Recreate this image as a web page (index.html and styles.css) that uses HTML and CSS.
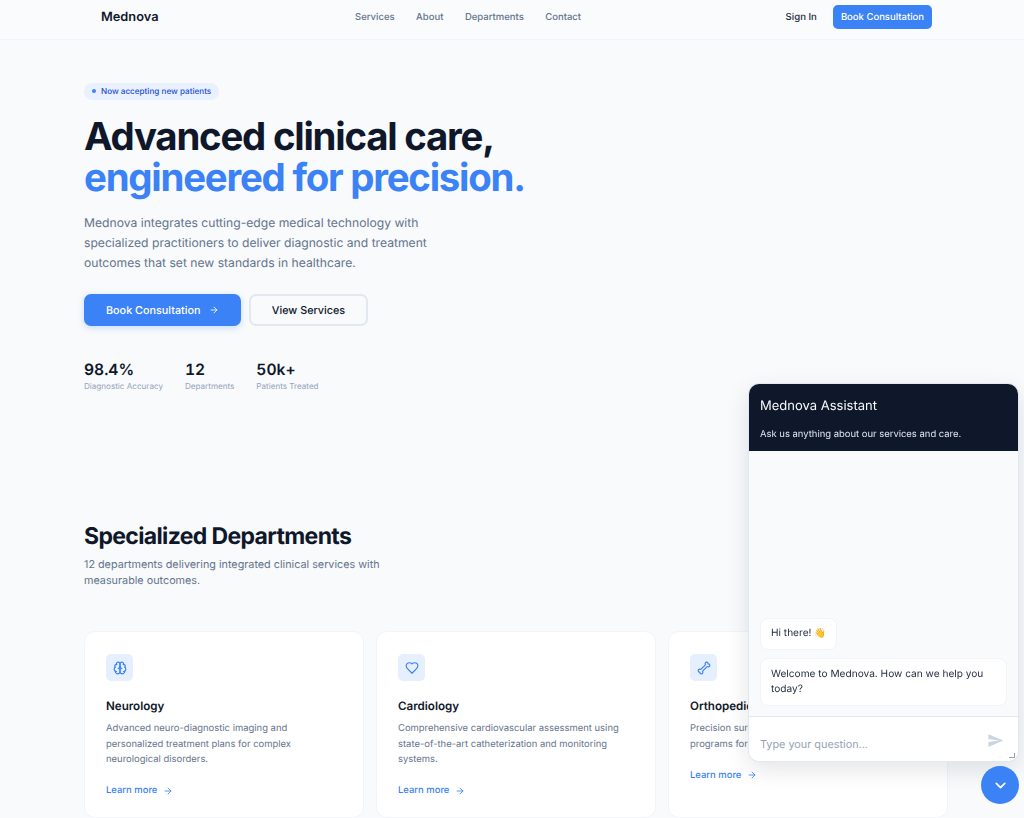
FILE: index.html
```html
<!DOCTYPE html>
<html lang="en">
<head>
<meta charset="utf-8">
<title>Mednova</title>
<link rel="stylesheet" href="styles.css">
</head>
<body>
<header class="nav">
  <div class="nav-inner">
    <a class="logo">Mednova</a>
    <nav class="nav-links">
      <a>Services</a><a>About</a><a>Departments</a><a>Contact</a>
    </nav>
    <div class="nav-actions">
      <a class="sign-in">Sign In</a>
      <a class="nav-cta">Book Consultation</a>
    </div>
  </div>
</header>
<main class="page">
  <section class="hero">
    <div class="badge"><span class="badge-dot"></span>Now accepting new patients</div>
    <h1>Advanced clinical care,<br><span class="accent">engineered for precision.</span></h1>
    <p class="lead">Mednova integrates cutting-edge medical technology with specialized practitioners to deliver diagnostic and treatment outcomes that set new standards in healthcare.</p>
    <div class="hero-actions">
      <a class="btn btn-primary">Book Consultation
        <svg class="arrow" viewBox="0 0 24 24"><path d="M5 12h14M12 5l7 7-7 7"/></svg>
      </a>
      <a class="btn btn-outline">View Services</a>
    </div>
    <div class="stats">
      <div><div class="stat-value">98.4%</div><div class="stat-label">Diagnostic Accuracy</div></div>
      <div><div class="stat-value">12</div><div class="stat-label">Departments</div></div>
      <div><div class="stat-value">50k+</div><div class="stat-label">Patients Treated</div></div>
    </div>
  </section>
  <section class="departments">
    <h2>Specialized Departments</h2>
    <p class="section-lead">12 departments delivering integrated clinical services with measurable outcomes.</p>
    <div class="cards">
      <article class="card">
        <div class="card-icon"><svg viewBox="0 0 24 24"><path d="M12 5a3 3 0 1 0-5.997.125 4 4 0 0 0-2.526 5.77 4 4 0 0 0 .556 6.588A4 4 0 1 0 12 18Z"/><path d="M12 5a3 3 0 1 1 5.997.125 4 4 0 0 1 2.526 5.77 4 4 0 0 1-.556 6.588A4 4 0 1 1 12 18Z"/><path d="M15 13a4.5 4.5 0 0 1-3-4 4.5 4.5 0 0 1-3 4"/><path d="M17.599 6.5a3 3 0 0 0 .399-1.375"/><path d="M6.003 5.125A3 3 0 0 0 6.401 6.5"/><path d="M3.477 10.896a4 4 0 0 1 .585-.396"/><path d="M19.938 10.5a4 4 0 0 1 .585.396"/><path d="M6 18a4 4 0 0 1-1.967-.516"/><path d="M19.967 17.484A4 4 0 0 1 18 18"/></svg></div>
        <h3>Neurology</h3>
        <p>Advanced neuro-diagnostic imaging and personalized treatment plans for complex neurological disorders.</p>
        <a class="learn">Learn more <svg class="arrow" viewBox="0 0 24 24"><path d="M5 12h14M12 5l7 7-7 7"/></svg></a>
      </article>
      <article class="card">
        <div class="card-icon"><svg viewBox="0 0 24 24"><path d="M19 14c1.49-1.46 3-3.21 3-5.5A5.5 5.5 0 0 0 16.5 3c-1.76 0-3 .5-4.5 2-1.5-1.5-2.74-2-4.5-2A5.5 5.5 0 0 0 2 8.5c0 2.3 1.5 4.05 3 5.5l7 7Z"/></svg></div>
        <h3>Cardiology</h3>
        <p>Comprehensive cardiovascular assessment using state-of-the-art catheterization and monitoring systems.</p>
        <a class="learn">Learn more <svg class="arrow" viewBox="0 0 24 24"><path d="M5 12h14M12 5l7 7-7 7"/></svg></a>
      </article>
      <article class="card">
        <div class="card-icon"><svg viewBox="0 0 24 24"><path d="M17 10c.7-.7 1.69 0 2.5 0a2.5 2.5 0 1 0 0-5 .5.5 0 0 1-.5-.5 2.5 2.5 0 1 0-5 0c0 .81.7 1.8 0 2.5l-7 7c-.7.7-1.69 0-2.5 0a2.5 2.5 0 0 0 0 5c.28 0 .5.22.5.5a2.5 2.5 0 1 0 5 0c0-.81-.7-1.8 0-2.5Z"/></svg></div>
        <h3>Orthopedics</h3>
        <p>Precision surgical interventions and rehabilitation programs for lasting mobility.</p>
        <a class="learn">Learn more <svg class="arrow" viewBox="0 0 24 24"><path d="M5 12h14M12 5l7 7-7 7"/></svg></a>
      </article>
    </div>
  </section>
</main>
<aside class="chat">
  <div class="chat-head">
    <div class="chat-title">Mednova Assistant</div>
    <div class="chat-sub">Ask us anything about our services and care.</div>
  </div>
  <div class="chat-body">
    <div class="bubble">Hi there! <span class="emoji">👋</span></div>
    <div class="bubble">Welcome to Mednova. How can we help you today?</div>
  </div>
  <div class="chat-foot">
    <span class="placeholder">Type your question...</span>
    <svg class="send" viewBox="0 0 24 24"><path d="M2.01 21 23 12 2.01 3 2 10l15 2-15 2z"/></svg>
    <span class="grip"></span>
  </div>
</aside>
<button class="fab" aria-label="Close chat"><svg viewBox="0 0 24 24"><path d="m6 9 6 6 6-6"/></svg></button>
</body>
</html>
```

FILE: styles.css
```css
* { box-sizing: border-box; }
html, body { height: 100%; overflow: hidden; }
body { margin: 0; background: #f8fafc; color: #0f172a; font-family: Inter, "Liberation Sans", sans-serif; text-rendering: geometricPrecision; }
a { text-decoration: none; }
h1, h2, h3, p { margin: 0; }

.nav { height: 40px; border-bottom: 1px solid #f1f5f9; background: #f9fbfd; padding: 0 76px 0 84px; }
.nav-inner { height: 39px; padding: 0 16px 5px 17px; display: flex; align-items: center; justify-content: space-between; }
.logo { font-size: 12.8px; font-weight: 600; color: #0f172a; }
.nav-links { display: flex; gap: 21.5px; margin-right: 8px; font-size: 9.5px; font-weight: 500; color: #64748b; }
.nav-actions { display: flex; align-items: center; gap: 16px; }
.sign-in { font-size: 9.6px; font-weight: 500; color: #1e293b; }
.nav-cta { height: 24px; padding: 0 8px; display: flex; align-items: center; background: #3b82f6; color: #fff; font-size: 9.5px; font-weight: 500; border-radius: 5px; }

.page { padding: 0 76px 0 84px; }
.hero { padding-top: 43px; }
.badge { display: flex; width: fit-content; align-items: center; height: 17px; padding: 0 8px 1px; gap: 5px; background: #e9f1fe; color: #1d4ed8; font-size: 8.15px; font-weight: 500; border-radius: 9px; }
.badge-dot { width: 4px; height: 4px; border-radius: 50%; background: #3b82f6; }
h1 { margin-top: 17px; font-size: 38.4px; line-height: 40.5px; font-weight: 700; letter-spacing: -0.032em; }
.accent { color: #3b82f6; }
.lead { margin-top: 15px; width: 350px; font-size: 12.15px; line-height: 20px; color: #64748b; }
.hero-actions { display: flex; gap: 8px; margin-top: 21px; }
.btn { height: 32px; display: flex; align-items: center; border-radius: 7px; font-size: 10.8px; font-weight: 500; }
.btn-primary { width: 157px; padding-left: 22px; gap: 9px; background: #3b82f6; color: #fff; box-shadow: 0 2px 6px rgba(59,130,246,.25); }
.btn-outline { width: 119px; justify-content: center; border: 2px solid #e2e8f0; color: #0f172a; }
.arrow { width: 10px; height: 10px; fill: none; stroke: currentColor; stroke-width: 2; stroke-linecap: round; stroke-linejoin: round; }
.stats { display: flex; gap: 22px; margin-top: 34px; }
.stat-value { font-size: 15.6px; line-height: 20px; font-weight: 600; color: #0f172a; font-variant-numeric: tabular-nums; }
.stat-label { font-size: 8.1px; line-height: 12px; color: #94a3b8; }

.departments { padding-top: 130px; }
h2 { font-size: 23px; line-height: 28px; font-weight: 700; letter-spacing: -0.028em; }
.section-lead { margin-top: 7px; width: 310px; font-size: 10.8px; line-height: 16px; color: #64748b; }
.cards { display: grid; grid-template-columns: repeat(3, 280px); gap: 12px; margin-top: 42px; }
.card { height: 187px; padding: 22px 21px; background: #fff; border: 1px solid #f1f5f9; border-radius: 11px; }
.card-icon { width: 27px; height: 27px; display: flex; align-items: center; justify-content: center; background: #e6effd; border-radius: 5px; }
.card-icon svg { width: 14px; height: 14px; fill: none; stroke: #3b82f6; stroke-width: 2; stroke-linecap: round; stroke-linejoin: round; }
h3 { margin-top: 16px; font-size: 11.6px; line-height: 18px; font-weight: 600; }
.card p { margin-top: 6px; font-size: 9.45px; line-height: 15.5px; color: #64748b; }
.learn { margin-top: 17.5px; display: flex; align-items: center; gap: 6px; color: #3b82f6; font-size: 9.45px; font-weight: 500; }

.chat { position: fixed; left: 749px; top: 384px; width: 269px; height: 377px; display: flex; flex-direction: column; background: #f8fafc; border-radius: 10px; overflow: hidden; box-shadow: 0 0 0 1px #e2e8f0, 0 8px 24px rgba(15,23,42,.12); }
.chat-head { height: 67px; padding: 12px 11px 0; background: #0f172a; color: #f8fafc; flex: none; }
.chat-title { font-size: 13px; line-height: 20px; font-weight: 400; }
.chat-sub { margin-top: 12px; font-size: 9.45px; line-height: 14px; color: #e2e8f0; }
.chat-body { flex: 1; padding: 0 11px 10px; display: flex; flex-direction: column; justify-content: flex-end; align-items: flex-start; gap: 8px; }
.bubble { padding: 7.5px 10px; background: #fff; border: 1px solid #f1f5f9; border-radius: 8px; font-size: 10.15px; line-height: 15.5px; color: #1e293b; }
.emoji { font-size: 9.6px; }
.chat-foot { height: 45px; position: relative; display: flex; align-items: center; justify-content: space-between; padding: 9px 14px 0 11px; background: #fff; border-top: 1px solid #e2e8f0; flex: none; }
.placeholder { font-size: 10.85px; color: #94a3b8; }
.send { width: 17px; height: 17px; fill: #cbd5e1; margin-top: -7px; }
.grip { position: absolute; right: 3px; bottom: 3px; width: 6px; height: 5px; border-right: 1.5px solid #94a3b8; border-bottom: 1.5px solid #94a3b8; }
.fab { position: fixed; left: 981px; top: 766px; width: 38px; height: 38px; padding: 0; display: flex; align-items: center; justify-content: center; background: #3b82f6; border: 0; border-radius: 50%; }
.fab svg { width: 17px; height: 17px; fill: none; stroke: #fff; stroke-width: 2.4; stroke-linecap: round; stroke-linejoin: round; }
```
